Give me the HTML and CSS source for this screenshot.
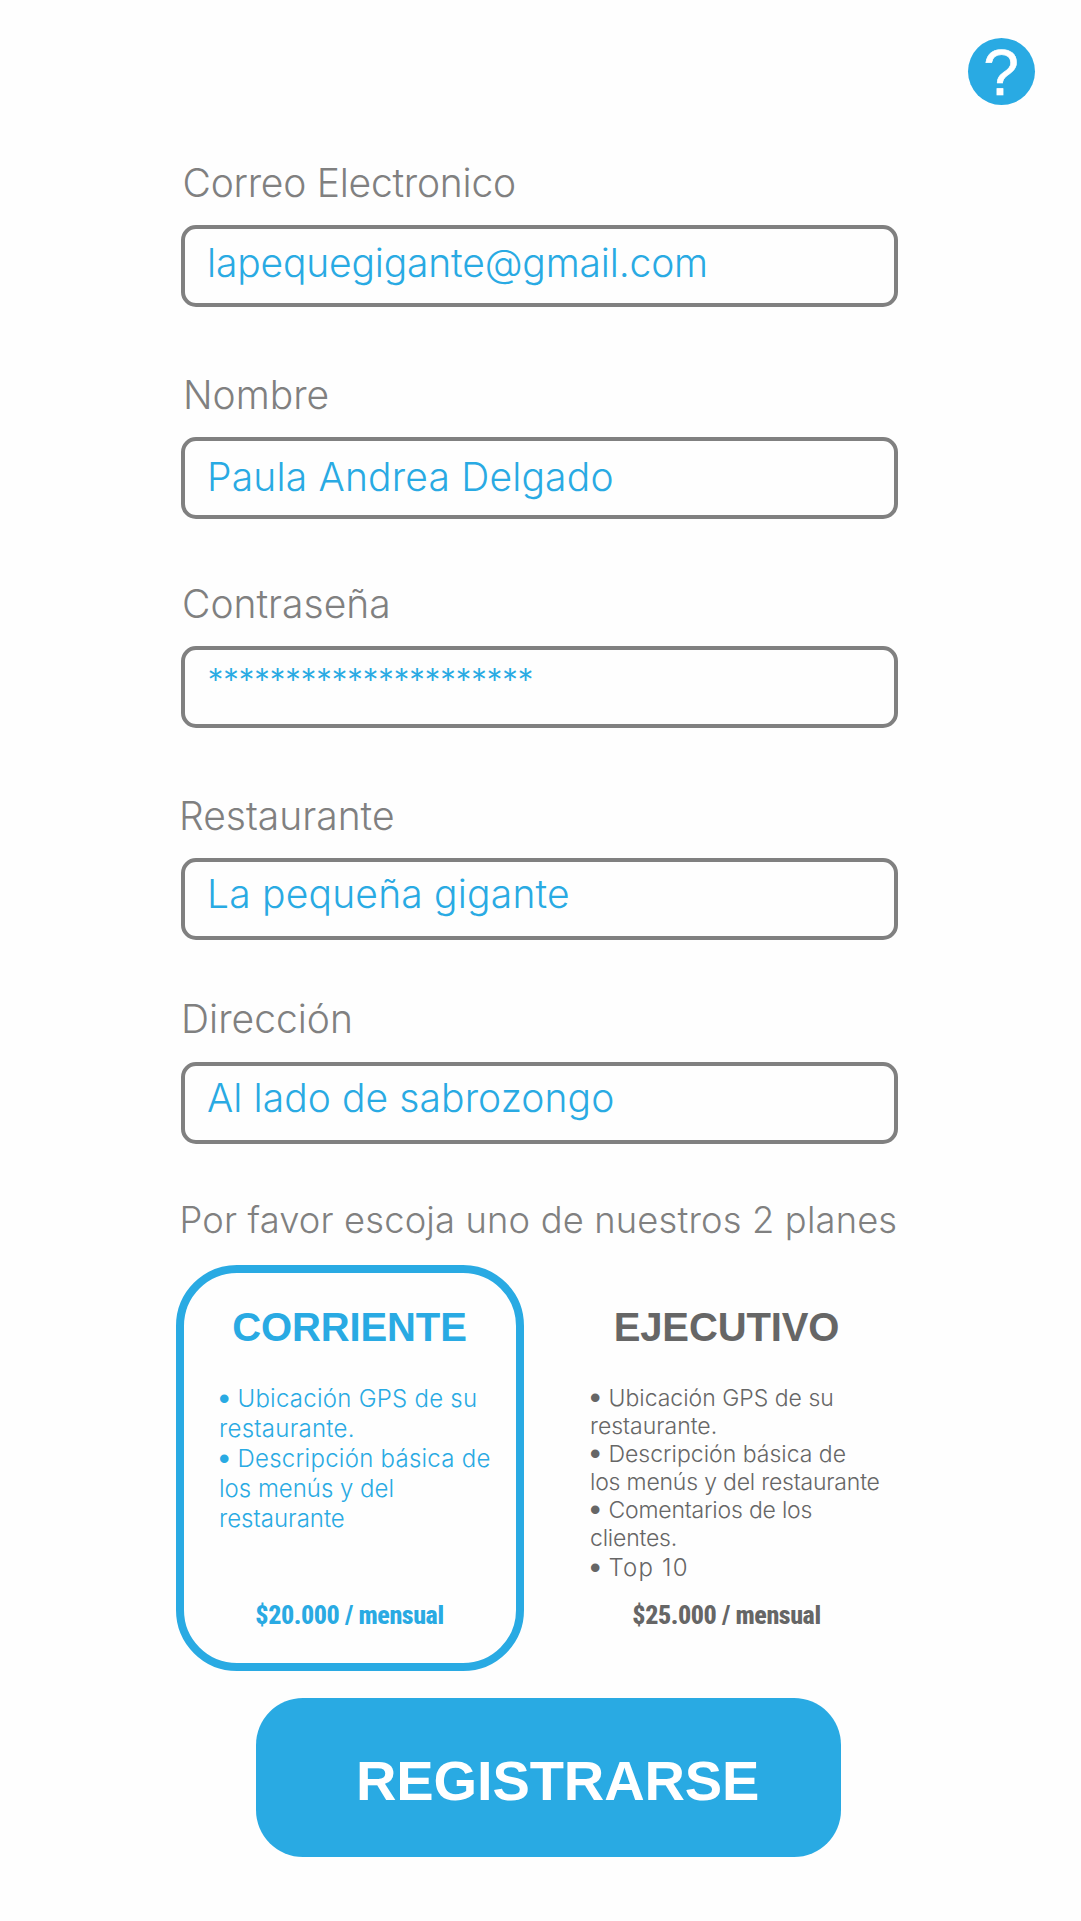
FILE: index.html
```
<!DOCTYPE html>
<html lang="es">
<head>
<meta charset="utf-8">
<title>Registro</title>
<link rel="stylesheet" href="styles.css">
</head>
<body>
<header class="topbar">
  <a class="help">?</a>
</header>
<main class="form">
  <section class="field">
    <div class="label label--email">Correo Electronico</div>
    <div class="value value--email">lapequegigante@gmail.com</div>
  </section>
  <section class="field field--name">
    <div class="label">Nombre</div>
    <div class="value value--name">Paula Andrea Delgado</div>
  </section>
  <section class="field field--password">
    <div class="label">Contraseña</div>
    <div class="value value--password">*********************</div>
  </section>
  <section class="field field--restaurant">
    <div class="label">Restaurante</div>
    <div class="value value--restaurant">La pequeña gigante</div>
  </section>
  <section class="field field--address">
    <div class="label">Dirección</div>
    <div class="value value--address">Al lado de sabrozongo</div>
  </section>
  <div class="prompt">Por favor escoja uno de nuestros 2 planes</div>
  <div class="plans">
    <article class="plan plan--selected">
      <h2 class="plan-title">CORRIENTE</h2>
      <ul class="features">
        <li><span class="dot">•</span>Ubicación GPS de su<br>restaurante.</li>
        <li><span class="dot">•</span>Descripción básica de<br><span class="tight">los menús y del<br>restaurante</span></li>
      </ul>
      <div class="price">$20.000 / mensual</div>
    </article>
    <article class="plan plan--executive">
      <h2 class="plan-title">EJECUTIVO</h2>
      <ul class="features">
        <li><span class="dot">•</span>Ubicación GPS de su<br>restaurante.</li>
        <li><span class="dot">•</span>Descripción básica de<br><span class="tight">los menús y del restaurante</span></li>
        <li><span class="dot">•</span><span class="tight">Comentarios de los<br>clientes.</span></li>
        <li class="top"><span class="dot">•</span>Top 10</li>
      </ul>
      <div class="price">$25.000 / mensual</div>
    </article>
  </div>
  <button class="submit" type="button">REGISTRARSE</button>
</main>
</body>
</html>
```
FILE: styles.css
```
* {
  box-sizing: border-box;
}

body {
  margin: 0;
  height: 1921px;
  background: #fefefe;
  color: #808080;
  font-family: Inter, "Liberation Sans", sans-serif;
  font-weight: 270;
}

.topbar {
  display: flex;
  justify-content: flex-end;
  height: 163px;
  padding: 38px 46px 0 0;
}

.help {
  width: 67px;
  height: 67px;
  padding-right: 1px;
  border-radius: 50%;
  background: #29aae3;
  color: #fff;
  font: 64px/70px "Liberation Sans", sans-serif;
  text-align: center;
  -webkit-text-stroke: 0.6px #fff;
}

.form {
  width: 717px;
  margin-left: 181px;
}

.field {
  font-size: 39px;
}

.field--name,
.field--restaurant {
  margin-top: 68px;
}

.field--password {
  margin-top: 65px;
}

.field--address {
  margin-top: 60px;
}

.label {
  height: 62px;
  padding-left: 1px;
  line-height: 40px;
}

.label--email {
  padding-left: 1.5px;
  letter-spacing: -0.25px;
}

.field--name .label {
  padding-left: 2px;
}

.field--restaurant .label {
  margin-left: -3px;
}

.field--address .label {
  padding-left: 0;
  line-height: 37px;
}

.value {
  height: 82px;
  padding-left: 22px;
  border: 4px solid #808080;
  border-radius: 15px;
  color: #29aae3;
  line-height: 64px;
}

.value--email {
  line-height: 67px;
  letter-spacing: -0.17px;
}

.value--name {
  line-height: 72px;
  letter-spacing: 0.18px;
}

.value--password {
  padding-left: 22px;
  font-family: Lato, sans-serif;
  font-size: 40px;
  font-weight: 400;
  line-height: 68px;
  letter-spacing: -1.5px;
}

.value--restaurant {
  letter-spacing: 0.2px;
}

.value--address {
  letter-spacing: 0.08px;
}

.prompt {
  margin: 56px 0 25px -1.5px;
  font-size: 36.3px;
  line-height: 40px;
  letter-spacing: 0.17px;
  white-space: nowrap;
}

.plans {
  display: grid;
  grid-template-columns: 348px 348px;
  gap: 29px;
  margin-left: -5px;
}

.plan {
  display: flex;
  flex-direction: column;
  height: 406px;
  padding: 34px 1px 33px 0;
  border: 8px solid transparent;
  border-radius: 61px;
  color: #666;
}

.plan--selected {
  border-color: #29aae3;
  color: #29aae3;
}

.plan-title {
  margin: 0 0 37px;
  font: bold 40px/40px "Liberation Sans", sans-serif;
  letter-spacing: -0.12px;
  text-align: center;
}

.features {
  margin: 0;
  padding: 0 0 0 35px;
  list-style: none;
  font-size: 24px;
  line-height: 30px;
  letter-spacing: 0.25px;
  white-space: nowrap;
}

.features .tight {
  letter-spacing: -0.02px;
}

.plan--executive .features {
  padding-left: 29px;
  font-size: 23px;
  line-height: 28px;
  letter-spacing: 0;
}

.plan--executive .features .tight {
  letter-spacing: -0.2px;
}

.plan--executive .features .top {
  font-size: 24px;
  line-height: 32px;
  letter-spacing: 1.2px;
}

.dot {
  display: inline-block;
  width: 18.5px;
  padding-left: 1px;
  font: 24px/20px "Liberation Sans", sans-serif;
  letter-spacing: 0;
  -webkit-text-stroke: 2px currentColor;
}

.price {
  margin-top: auto;
  font: 800 26px/30px "Roboto Condensed", Roboto, sans-serif;
  letter-spacing: -0.42px;
  text-align: center;
}

.submit {
  display: block;
  width: 585px;
  height: 159px;
  margin: 27px 0 0 75px;
  padding: 7px 0 0 100px;
  border: 0;
  border-radius: 47px;
  background: #29aae3;
  color: #fff;
  font: bold 56px/60px "Liberation Sans", sans-serif;
  letter-spacing: -0.11px;
  text-align: left;
}
```
